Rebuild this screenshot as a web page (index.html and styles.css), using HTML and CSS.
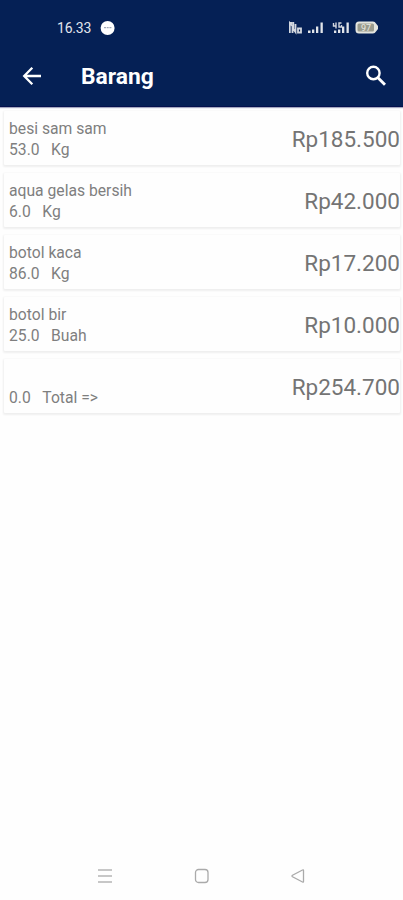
FILE: index.html
```html
<!DOCTYPE html>
<html lang="id">
<head>
<meta charset="utf-8">
<title>Barang</title>
<link rel="stylesheet" href="styles.css">
</head>
<body>
<div class="screen">
  <header class="header">
    <div class="status">
      <span class="time">16.33</span>
      <svg class="chat" width="16" height="16" viewBox="0 0 16 16"><circle cx="7.6" cy="8" r="7" fill="#fff"/><path d="M4 7.7h2M6.7 7.7h2M9.4 7.7h2" stroke="#8b93a8" stroke-width="1"/></svg>
      <svg class="signals" width="92" height="16" viewBox="0 0 92 16">
        <g fill="none" stroke="#d3d7df" stroke-width="1.800">
          <path d="M.3 3h3M.8 13V3l3.500 4V2M3.500 13V8l3 4V4M9 8.500v4M9 8.500h3v4H9z"/>
        </g>
        <g fill="#e2e5ea">
          <path d="M19 10.500h2.500V13H19zM23 9.500h2.300V13H23zM27 6.500h2.300V13H27zM31.500 2.500h2.300V13h-2.300z"/>
          <path d="M45 10.500h2.300V13H45zM49 9.500h2.300V13H49zM53 6.500h2.300V13H53zM57.500 2.500h2.300V13h-2.300z"/>
        </g>
        <path d="M44.500 3v3h3M47 2.500v6M52.500 3H50v4h2.500V5" fill="none" stroke="#d3d7df" stroke-width="1.400"/>
        <path d="M70 1.500h14q2 0 3 2l2 2.500v3l-2 2.500q-1 2-3 2H70q-3.500 0-3.500-3.500V5q0-3.500 3.500-3.500z" fill="#e4e5df"/>
        <rect x="68.500" y="3.500" width="16.500" height="8" rx="1.500" fill="#9a9b8d"/>
        <text class="charge" x="72" y="10.800">97</text>
      </svg>
    </div>
    <div class="toolbar">
      <svg class="back" width="20" height="20" viewBox="0 0 20 20"><path d="M19 10H2.500M10.300 1.800L2.200 10l8.100 8.200" fill="none" stroke="#fff" stroke-width="2.300"/></svg>
      <h1 class="title">Barang</h1>
      <svg class="search" width="22" height="22" viewBox="0 0 22 22"><circle cx="8.400" cy="8" r="6.200" fill="none" stroke="#fff" stroke-width="2.400"/><path d="M12.700 12.500l7.300 7.300" stroke="#fff" stroke-width="2.900"/></svg>
    </div>
  </header>
  <main class="list">
    <article class="card"><div class="info"><p class="name">besi sam sam</p><p class="qty"><span>53.0</span><span>Kg</span></p></div><strong class="price">Rp185.500</strong></article>
    <article class="card"><div class="info"><p class="name">aqua gelas bersih</p><p class="qty"><span>6.0</span><span>Kg</span></p></div><strong class="price">Rp42.000</strong></article>
    <article class="card"><div class="info"><p class="name">botol kaca</p><p class="qty"><span>86.0</span><span>Kg</span></p></div><strong class="price">Rp17.200</strong></article>
    <article class="card"><div class="info"><p class="name">botol bir</p><p class="qty"><span>25.0</span><span>Buah</span></p></div><strong class="price">Rp10.000</strong></article>
    <article class="card"><div class="info"><p class="name"></p><p class="qty"><span>0.0</span><span>Total =&gt;</span></p></div><strong class="price">Rp254.700</strong></article>
  </main>
  <nav class="nav">
    <svg width="16" height="16" viewBox="0 0 16 16"><path d="M1 2h14M1 8h14M1 14h14" stroke="#b5b5b5" stroke-width="1.300"/></svg>
    <svg width="16" height="16" viewBox="0 0 16 16"><rect x="1.500" y="1.500" width="12.500" height="13" rx="3" fill="none" stroke="#aaa" stroke-width="1.300"/></svg>
    <svg width="16" height="16" viewBox="0 0 16 16"><path d="M13.500 2.500v11q0 1-1 .5L2.500 8.700q-1-.7 0-1.400L12.500 2q1-.5 1 .5z" fill="none" stroke="#aaa" stroke-width="1.300"/></svg>
  </nav>
</div>
</body>
</html>
```
FILE: styles.css
```css
* { box-sizing: border-box; }
body { margin: 0; background: #fefefe; font-family: Roboto, "Liberation Sans", sans-serif; }
.screen { height: 900px; display: flex; flex-direction: column; }
.header { height: 107px; background: #052055; color: #fff; border-bottom: 1px solid #04104d; box-shadow: 0 1px 1px #a5a8c0; }
.status { height: 52px; padding: 4px 22px 0 57px; display: flex; align-items: center; }
.time { width: 43px; font-size: 14px; letter-spacing: -.2px; color: #e2e5ec; }
.signals { margin-left: auto; }
.charge { font-size: 9px; fill: #e9e9e2; }
.toolbar { height: 48px; padding: 0 16px 0 22px; display: flex; align-items: center; }
.title { margin: 0 auto 0 39px; padding-top: 2px; font-size: 22.8px; line-height: 28px; font-weight: 700; }
.list { flex: 1; padding: 4px 3px 0 4px; display: flex; flex-direction: column; gap: 8px; }
.card { height: 54px; padding: 7px 0 0 5px; display: flex; justify-content: space-between; background: #fefefe; border-radius: 1px; box-shadow: 0 1px 2px 1px #efefef; color: #7f7f7f; }
.name, .qty { height: 21px; margin: 0; font-size: 15.7px; line-height: 21px; }
.qty { display: flex; gap: 11.5px; }
.price { font-size: 22.5px; line-height: 28px; margin-top: 7px; font-weight: 400; color: #747474; }
.nav { height: 48px; padding: 0 97px; display: flex; align-items: center; justify-content: space-between; }
```
